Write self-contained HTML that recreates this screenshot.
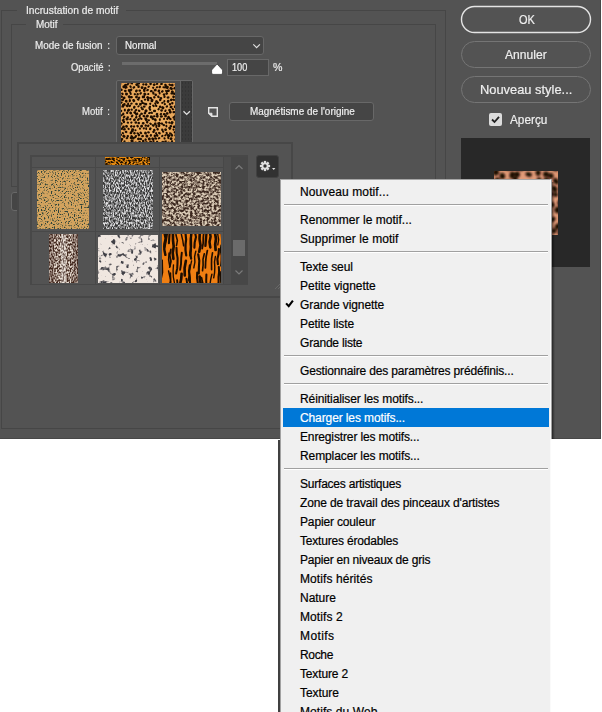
<!DOCTYPE html>
<html><head><meta charset="utf-8">
<style>
html,body{margin:0;padding:0;}
body{width:602px;height:712px;position:relative;overflow:hidden;background:#fff;font-family:"Liberation Sans",sans-serif;}
.a{position:absolute;}
#dlg{left:0;top:0;width:600px;height:438px;background:#535353;border-right:1px solid #474747;border-bottom:1px solid #474747;}
.t{position:absolute;color:#ececec;font-size:10.5px;line-height:14px;white-space:nowrap;-webkit-text-stroke:0.2px #ececec;}
.t{transform-origin:0 0;}
.c{margin-left:5px;}
.bt{font-size:13px;line-height:16px;color:#f0f0f0;}
.fs{position:absolute;border:1px solid #464646;box-sizing:border-box;}
.btn{position:absolute;box-sizing:border-box;border:1px solid #757575;border-radius:14px;color:#f0f0f0;font-size:13px;text-align:center;line-height:25px;}
#menu{left:280px;top:179px;width:271px;height:540px;background:#f0f0f0;box-sizing:border-box;border-top:1px solid #a6a6a6;border-right:1px solid #fafafa;border-left:1px solid #a2a2a2;}
.mi{-webkit-text-stroke:0.2px currentColor;position:absolute;left:283px;width:266px;height:19px;line-height:21px;font-size:12px;color:#000;white-space:nowrap;box-sizing:border-box;padding-left:17px;}
.hl{background:#0078d7;color:#fff;}
.sep{position:absolute;left:284px;width:264px;height:1px;background:#a0a0a0;border-bottom:1px solid #fff;}
</style></head><body>
<div id="dlg" class="a">
  <!-- outer fieldset -->
  <div class="fs" style="left:1px;top:10px;width:445px;height:419px;"></div>
  <div class="a" style="left:17px;top:4px;width:109px;height:14px;background:#535353;"></div>
  <div class="t" id="t_inc" style="left:25.8px;top:2.5px;transform:scaleX(0.976);">Incrustation de motif</div>
  <!-- inner fieldset -->
  <div class="fs" style="left:11px;top:24px;width:425px;height:163px;"></div>
  <div class="a" style="left:26px;top:17px;width:37px;height:14px;background:#535353;"></div>
  <div class="t" id="t_motif" style="left:35.5px;top:16.5px;transform:scaleX(0.945);">Motif</div>

  <div class="t" id="t_mode" style="left:34.7px;top:37.5px;transform:scaleX(0.940);">Mode de fusion<span class="c">:</span></div>
  <div class="a" style="left:116px;top:36px;width:148px;height:19px;box-sizing:border-box;background:#454545;border:1px solid #676767;border-radius:3px;"></div>
  <div class="t" id="t_normal" style="left:124.8px;top:37.5px;color:#f0f0f0;transform:scaleX(0.926);">Normal</div>
  <svg class="a" style="left:252px;top:43px;" width="10" height="7" viewBox="0 0 10 7"><path d="M1.3 1.3 L4.6 4.6 L7.9 1.3" fill="none" stroke="#e0e0e0" stroke-width="1.2"/></svg>

  <div class="t" id="t_opa" style="left:70.7px;top:59.5px;transform:scaleX(0.900);">Opacité<span class="c">:</span></div>
  <div class="a" style="left:122px;top:62px;width:95px;height:3px;background:#6c6c6c;"></div>
  <svg class="a" style="left:210px;top:63px;" width="14" height="14" viewBox="0 0 14 14"><path d="M7.1 1.0 L12.6 7.0 V10.0 Q12.6 11.4 11.2 11.4 H3.0 Q1.6 11.4 1.6 10.0 V7.0 Z" fill="#fff" stroke="#3a3a3a" stroke-width="0.8"/></svg>
  <div class="a" style="left:227px;top:59px;width:42px;height:17px;box-sizing:border-box;background:#454545;border:1px solid #686868;"></div>
  <div class="t" id="t_100" style="left:231.5px;top:59.5px;color:#f0f0f0;transform:scaleX(0.875);">100</div>
  <div class="t" id="t_pct" style="left:272.7px;top:59.5px;transform:scaleX(1.011);">%</div>

  <div class="t" id="t_motif2" style="left:81.7px;top:103.5px;transform:scaleX(0.906);">Motif<span class="c">:</span></div>
  <div class="a" style="left:116px;top:80px;width:77px;height:65px;box-sizing:border-box;background:#4b4b4b;border:1px solid #686868;border-radius:2px;"></div>
  <div class="a" style="left:180px;top:81px;width:1px;height:62px;background:#646464;"></div>
  <div class="a" style="left:181px;top:81px;width:11px;height:62px;background-color:#3b3b3b;background-image:radial-gradient(#343434 0.7px,transparent 0.8px);background-size:3px 4px;"></div>
  <svg class="a" style="left:182px;top:110px;" width="10" height="7" viewBox="0 0 10 7"><path d="M1.5 1.2 L4.7 4.4 L7.9 1.2" fill="none" stroke="#e0e0e0" stroke-width="1.3"/></svg>
  <!--LEO1--><svg class="a" style="left:121px;top:83px;" width="54" height="60" viewBox="0 0 54 60"><defs><radialGradient id="leo1g" cx="50%" cy="50%" r="70%"><stop offset="0" stop-color="#f0b468"/><stop offset="1" stop-color="#e2a052"/></radialGradient><filter id="leo1f" x="0" y="0" width="100%" height="100%"><feGaussianBlur stdDeviation="0.3"/></filter></defs><rect width="54" height="60" fill="url(#leo1g)"/><g filter="url(#leo1f)"><path d="M-3.5 -3.0A1.1 1.0 17 1 0 -1.3 -2.3A1.1 1.0 17 1 0 -3.5 -3.0ZM-0.2 -2.0A1.1 1.4 15 1 0 1.9 -1.5A1.1 1.4 15 1 0 -0.2 -2.0ZM4.0 -2.3A1.1 1.0 27 1 0 5.9 -1.3A1.1 1.0 27 1 0 4.0 -2.3ZM8.4 -1.8A1.0 1.3 66 1 0 9.1 -0.1A1.0 1.3 66 1 0 8.4 -1.8ZM13.7 -3.6A1.1 1.3 95 1 0 13.5 -1.4A1.1 1.3 95 1 0 13.7 -3.6ZM14.9 -2.5A1.3 1.2 45 1 0 16.7 -0.7A1.3 1.2 45 1 0 14.9 -2.5ZM20.9 -3.2A1.4 1.4 140 1 0 18.7 -1.4A1.4 1.4 140 1 0 20.9 -3.2ZM24.5 -3.9A1.1 1.3 79 1 0 25.0 -1.8A1.1 1.3 79 1 0 24.5 -3.9ZM28.9 -2.9A1.2 1.2 110 1 0 28.1 -0.7A1.2 1.2 110 1 0 28.9 -2.9ZM30.3 -2.8A1.1 1.3 20 1 0 32.4 -2.0A1.1 1.3 20 1 0 30.3 -2.8ZM34.8 -2.5A1.1 1.2 120 1 0 33.7 -0.6A1.1 1.2 120 1 0 34.8 -2.5ZM38.5 -3.6A1.3 1.0 51 1 0 40.1 -1.6A1.3 1.0 51 1 0 38.5 -3.6ZM43.7 -2.5A1.0 1.2 150 1 0 41.9 -1.5A1.0 1.2 150 1 0 43.7 -2.5ZM44.5 -2.1A1.4 1.0 15 1 0 47.2 -1.4A1.4 1.0 15 1 0 44.5 -2.1ZM49.3 -3.0A1.2 1.4 31 1 0 51.4 -1.7A1.2 1.4 31 1 0 49.3 -3.0ZM54.5 -2.6A1.2 1.0 178 1 0 52.1 -2.5A1.2 1.0 178 1 0 54.5 -2.6ZM56.4 -2.0A1.1 1.3 83 1 0 56.6 0.2A1.1 1.3 83 1 0 56.4 -2.0ZM-0.6 -0.5A1.4 1.3 105 1 0 -1.4 2.3A1.4 1.3 105 1 0 -0.6 -0.5ZM5.6 1.6A1.3 1.0 158 1 0 3.3 2.6A1.3 1.0 158 1 0 5.6 1.6ZM6.0 0.6A1.0 1.1 40 1 0 7.5 1.9A1.0 1.1 40 1 0 6.0 0.6ZM10.8 -0.6A1.0 1.0 92 1 0 10.7 1.3A1.0 1.0 92 1 0 10.8 -0.6ZM15.1 0.6A1.2 1.1 53 1 0 16.5 2.4A1.2 1.1 53 1 0 15.1 0.6ZM16.7 -0.4A1.3 1.2 38 1 0 18.7 1.3A1.3 1.2 38 1 0 16.7 -0.4ZM21.2 1.3A1.2 1.1 9 1 0 23.6 1.6A1.2 1.1 9 1 0 21.2 1.3ZM24.3 0.4A1.3 1.2 51 1 0 26.0 2.5A1.3 1.2 51 1 0 24.3 0.4ZM29.9 -0.3A1.2 1.0 107 1 0 29.2 1.9A1.2 1.0 107 1 0 29.9 -0.3ZM32.4 0.8A1.2 1.1 48 1 0 34.0 2.5A1.2 1.1 48 1 0 32.4 0.8ZM35.5 -0.1A1.1 1.1 59 1 0 36.6 1.8A1.1 1.1 59 1 0 35.5 -0.1ZM40.3 -0.2A1.1 1.4 80 1 0 40.7 2.0A1.1 1.4 80 1 0 40.3 -0.2ZM45.7 2.1A1.2 1.4 167 1 0 43.4 2.6A1.2 1.4 167 1 0 45.7 2.1ZM49.2 0.9A1.0 1.1 110 1 0 48.5 2.7A1.0 1.1 110 1 0 49.2 0.9ZM51.1 0.7A1.4 1.4 86 1 0 51.3 3.5A1.4 1.4 86 1 0 51.1 0.7ZM55.5 -0.0A1.4 1.1 107 1 0 54.7 2.6A1.4 1.1 107 1 0 55.5 -0.0ZM-1.6 3.6A1.3 1.1 100 1 0 -2.0 6.2A1.3 1.1 100 1 0 -1.6 3.6ZM4.2 3.5A1.4 1.4 171 1 0 1.4 3.9A1.4 1.4 171 1 0 4.2 3.5ZM4.4 3.2A1.3 1.3 68 1 0 5.4 5.5A1.3 1.3 68 1 0 4.4 3.2ZM10.4 3.1A1.0 1.3 145 1 0 8.7 4.2A1.0 1.3 145 1 0 10.4 3.1ZM12.2 3.4A1.1 1.3 54 1 0 13.6 5.3A1.1 1.3 54 1 0 12.2 3.4ZM17.7 2.2A1.4 1.0 97 1 0 17.4 4.9A1.4 1.0 97 1 0 17.7 2.2ZM22.5 4.4A1.4 1.1 171 1 0 19.8 4.9A1.4 1.1 171 1 0 22.5 4.4ZM25.1 4.3A1.2 1.3 134 1 0 23.4 6.1A1.2 1.3 134 1 0 25.1 4.3ZM28.7 2.9A1.3 1.0 143 1 0 26.6 4.5A1.3 1.0 143 1 0 28.7 2.9ZM32.9 4.0A1.0 1.1 133 1 0 31.5 5.5A1.0 1.1 133 1 0 32.9 4.0ZM36.8 3.4A1.1 1.0 139 1 0 35.1 4.9A1.1 1.0 139 1 0 36.8 3.4ZM39.6 2.8A1.4 1.1 124 1 0 37.9 5.1A1.4 1.1 124 1 0 39.6 2.8ZM43.3 3.4A1.0 1.4 93 1 0 43.2 5.3A1.0 1.4 93 1 0 43.3 3.4ZM45.0 4.0A1.4 1.3 17 1 0 47.6 4.8A1.4 1.3 17 1 0 45.0 4.0ZM50.9 4.4A1.3 1.4 122 1 0 49.5 6.5A1.3 1.4 122 1 0 50.9 4.4ZM52.8 4.4A1.0 1.4 45 1 0 54.2 5.9A1.0 1.4 45 1 0 52.8 4.4ZM56.4 4.2A1.4 1.1 1 1 0 59.2 4.2A1.4 1.1 1 1 0 56.4 4.2ZM1.1 5.8A1.1 1.2 124 1 0 -0.2 7.7A1.1 1.2 124 1 0 1.1 5.8ZM4.6 6.8A1.2 1.2 105 1 0 4.0 9.1A1.2 1.2 105 1 0 4.6 6.8ZM9.4 7.0A1.3 1.4 160 1 0 6.9 7.9A1.3 1.4 160 1 0 9.4 7.0ZM10.7 5.6A1.4 1.2 119 1 0 9.4 8.1A1.4 1.2 119 1 0 10.7 5.6ZM15.9 6.6A1.4 1.2 112 1 0 14.9 9.2A1.4 1.2 112 1 0 15.9 6.6ZM18.8 6.6A1.0 1.3 92 1 0 18.7 8.7A1.0 1.3 92 1 0 18.8 6.6ZM24.4 7.3A1.2 1.3 172 1 0 22.1 7.6A1.2 1.3 172 1 0 24.4 7.3ZM27.7 6.3A1.4 1.1 147 1 0 25.4 7.9A1.4 1.1 147 1 0 27.7 6.3ZM31.6 7.8A1.4 1.0 165 1 0 28.9 8.5A1.4 1.0 165 1 0 31.6 7.8ZM33.9 5.9A1.3 1.1 76 1 0 34.5 8.3A1.3 1.1 76 1 0 33.9 5.9ZM36.7 7.5A1.2 1.3 22 1 0 38.9 8.4A1.2 1.3 22 1 0 36.7 7.5ZM42.5 7.7A1.4 1.0 149 1 0 40.1 9.1A1.4 1.0 149 1 0 42.5 7.7ZM44.1 7.4A1.4 1.0 29 1 0 46.7 8.8A1.4 1.0 29 1 0 44.1 7.4ZM48.8 7.5A1.4 1.1 169 1 0 46.1 8.0A1.4 1.1 169 1 0 48.8 7.5ZM52.1 7.7A1.2 1.2 125 1 0 50.7 9.6A1.2 1.2 125 1 0 52.1 7.7ZM56.9 7.0A1.1 1.1 160 1 0 54.9 7.7A1.1 1.1 160 1 0 56.9 7.0ZM-2.0 9.5A1.4 1.2 80 1 0 -1.6 12.2A1.4 1.2 80 1 0 -2.0 9.5ZM2.1 10.1A1.0 1.0 138 1 0 0.7 11.4A1.0 1.0 138 1 0 2.1 10.1ZM5.7 9.7A1.4 1.2 99 1 0 5.3 12.4A1.4 1.2 99 1 0 5.7 9.7ZM10.4 9.9A1.0 1.4 161 1 0 8.6 10.6A1.0 1.4 161 1 0 10.4 9.9ZM13.4 10.2A1.1 1.0 66 1 0 14.3 12.2A1.1 1.0 66 1 0 13.4 10.2ZM15.5 10.9A1.2 1.3 16 1 0 17.8 11.6A1.2 1.3 16 1 0 15.5 10.9ZM18.8 9.7A1.1 1.4 41 1 0 20.5 11.1A1.1 1.4 41 1 0 18.8 9.7ZM24.8 10.3A1.3 1.3 137 1 0 22.9 12.0A1.3 1.3 137 1 0 24.8 10.3ZM26.2 10.9A1.0 1.0 8 1 0 28.3 11.2A1.0 1.0 8 1 0 26.2 10.9ZM33.4 9.8A1.1 1.4 164 1 0 31.3 10.4A1.1 1.4 164 1 0 33.4 9.8ZM36.0 11.5A1.3 1.3 167 1 0 33.4 12.1A1.3 1.3 167 1 0 36.0 11.5ZM38.7 8.9A1.3 1.0 93 1 0 38.6 11.5A1.3 1.0 93 1 0 38.7 8.9ZM42.0 10.7A1.2 1.2 39 1 0 43.9 12.2A1.2 1.2 39 1 0 42.0 10.7ZM44.8 9.8A1.2 1.1 41 1 0 46.6 11.3A1.2 1.1 41 1 0 44.8 9.8ZM51.0 9.3A1.1 1.3 102 1 0 50.5 11.6A1.1 1.3 102 1 0 51.0 9.3ZM54.4 10.6A1.2 1.0 173 1 0 52.1 10.9A1.2 1.0 173 1 0 54.4 10.6ZM57.3 11.5A1.0 1.0 155 1 0 55.4 12.4A1.0 1.0 155 1 0 57.3 11.5ZM1.6 12.8A1.2 1.2 136 1 0 -0.2 14.5A1.2 1.2 136 1 0 1.6 12.8ZM4.5 14.7A1.4 1.3 174 1 0 1.6 15.0A1.4 1.3 174 1 0 4.5 14.7ZM9.5 13.2A1.4 1.4 150 1 0 7.1 14.6A1.4 1.4 150 1 0 9.5 13.2ZM11.8 13.8A1.4 1.1 165 1 0 9.1 14.5A1.4 1.1 165 1 0 11.8 13.8ZM14.7 12.9A1.3 1.4 54 1 0 16.3 15.1A1.3 1.4 54 1 0 14.7 12.9ZM18.7 13.8A1.3 1.1 122 1 0 17.3 16.0A1.3 1.1 122 1 0 18.7 13.8ZM22.2 12.5A1.4 1.4 80 1 0 22.7 15.2A1.4 1.4 80 1 0 22.2 12.5ZM27.6 13.6A1.3 1.3 134 1 0 25.8 15.4A1.3 1.3 134 1 0 27.6 13.6ZM28.2 14.8A1.4 1.0 11 1 0 30.9 15.4A1.4 1.0 11 1 0 28.2 14.8ZM32.5 13.3A1.2 1.1 51 1 0 34.1 15.2A1.2 1.1 51 1 0 32.5 13.3ZM37.1 12.6A1.3 1.0 78 1 0 37.6 15.1A1.3 1.0 78 1 0 37.1 12.6ZM38.5 15.2A1.4 1.2 0 1 0 41.3 15.2A1.4 1.2 0 1 0 38.5 15.2ZM42.4 13.5A1.1 1.4 8 1 0 44.6 13.8A1.1 1.4 8 1 0 42.4 13.5ZM47.0 13.5A1.1 1.1 88 1 0 47.1 15.6A1.1 1.1 88 1 0 47.0 13.5ZM51.3 13.6A1.1 1.3 8 1 0 53.6 13.9A1.1 1.3 8 1 0 51.3 13.6ZM55.5 13.4A1.0 1.2 130 1 0 54.2 14.9A1.0 1.2 130 1 0 55.5 13.4ZM-1.8 16.5A1.3 1.3 111 1 0 -2.7 19.0A1.3 1.3 111 1 0 -1.8 16.5ZM1.1 15.7A1.2 1.2 70 1 0 1.9 17.9A1.2 1.2 70 1 0 1.1 15.7ZM5.5 16.8A1.4 1.4 104 1 0 4.9 19.6A1.4 1.4 104 1 0 5.5 16.8ZM7.8 17.5A1.1 1.2 7 1 0 9.9 17.8A1.1 1.2 7 1 0 7.8 17.5ZM13.9 17.1A1.3 1.3 156 1 0 11.6 18.1A1.3 1.3 156 1 0 13.9 17.1ZM15.9 16.0A1.4 1.0 23 1 0 18.5 17.1A1.4 1.0 23 1 0 15.9 16.0ZM21.8 18.0A1.1 1.1 164 1 0 19.7 18.6A1.1 1.1 164 1 0 21.8 18.0ZM23.4 15.7A1.1 1.2 52 1 0 24.7 17.5A1.1 1.2 52 1 0 23.4 15.7ZM26.8 15.5A1.4 1.0 80 1 0 27.3 18.2A1.4 1.0 80 1 0 26.8 15.5ZM29.8 17.1A1.3 1.4 19 1 0 32.2 17.9A1.3 1.4 19 1 0 29.8 17.1ZM34.5 17.4A1.4 1.3 46 1 0 36.5 19.4A1.4 1.3 46 1 0 34.5 17.4ZM40.3 16.4A1.2 1.3 155 1 0 38.1 17.4A1.2 1.3 155 1 0 40.3 16.4ZM42.3 18.2A1.0 1.3 12 1 0 44.3 18.6A1.0 1.3 12 1 0 42.3 18.2ZM45.9 18.0A1.3 1.4 14 1 0 48.4 18.6A1.3 1.4 14 1 0 45.9 18.0ZM51.1 15.7A1.4 1.3 126 1 0 49.5 18.0A1.4 1.3 126 1 0 51.1 15.7ZM53.6 16.1A1.0 1.2 139 1 0 52.1 17.4A1.0 1.2 139 1 0 53.6 16.1ZM56.2 16.8A1.2 1.2 9 1 0 58.5 17.2A1.2 1.2 9 1 0 56.2 16.8ZM0.0 18.7A1.0 1.1 60 1 0 1.0 20.5A1.0 1.1 60 1 0 0.0 18.7ZM3.6 19.9A1.4 1.3 98 1 0 3.2 22.7A1.4 1.3 98 1 0 3.6 19.9ZM7.1 19.6A1.4 1.0 89 1 0 7.1 22.4A1.4 1.0 89 1 0 7.1 19.6ZM10.2 19.7A1.0 1.0 75 1 0 10.7 21.6A1.0 1.0 75 1 0 10.2 19.7ZM14.1 20.8A1.4 1.2 10 1 0 16.9 21.3A1.4 1.2 10 1 0 14.1 20.8ZM19.6 19.9A1.4 1.0 96 1 0 19.3 22.5A1.4 1.0 96 1 0 19.6 19.9ZM22.8 19.4A1.0 1.3 114 1 0 22.1 21.1A1.0 1.3 114 1 0 22.8 19.4ZM23.8 20.5A1.3 1.2 29 1 0 26.1 21.8A1.3 1.2 29 1 0 23.8 20.5ZM28.5 20.1A1.0 1.0 41 1 0 30.0 21.4A1.0 1.0 41 1 0 28.5 20.1ZM35.2 20.2A1.0 1.3 153 1 0 33.4 21.1A1.0 1.3 153 1 0 35.2 20.2ZM36.0 18.5A1.3 1.1 59 1 0 37.3 20.7A1.3 1.1 59 1 0 36.0 18.5ZM41.0 18.9A1.0 1.0 73 1 0 41.6 20.8A1.0 1.0 73 1 0 41.0 18.9ZM43.8 19.9A1.2 1.1 88 1 0 43.9 22.3A1.2 1.1 88 1 0 43.8 19.9ZM48.9 20.0A1.3 1.2 88 1 0 49.0 22.6A1.3 1.2 88 1 0 48.9 20.0ZM51.4 19.0A1.2 1.2 93 1 0 51.2 21.5A1.2 1.2 93 1 0 51.4 19.0ZM54.5 20.9A1.2 1.4 18 1 0 56.8 21.7A1.2 1.4 18 1 0 54.5 20.9ZM-2.2 23.2A1.4 1.0 35 1 0 0.1 24.8A1.4 1.0 35 1 0 -2.2 23.2ZM0.8 22.4A1.4 1.4 20 1 0 3.3 23.3A1.4 1.4 20 1 0 0.8 22.4ZM5.0 21.9A1.4 1.0 45 1 0 7.0 23.8A1.4 1.0 45 1 0 5.0 21.9ZM8.0 21.9A1.2 1.4 53 1 0 9.5 23.8A1.2 1.4 53 1 0 8.0 21.9ZM12.1 24.0A1.2 1.3 15 1 0 14.4 24.6A1.2 1.3 15 1 0 12.1 24.0ZM18.3 22.5A1.2 1.0 135 1 0 16.6 24.2A1.2 1.0 135 1 0 18.3 22.5ZM21.7 24.5A1.1 1.1 173 1 0 19.4 24.8A1.1 1.1 173 1 0 21.7 24.5ZM24.6 23.5A1.4 1.1 173 1 0 21.8 23.8A1.4 1.1 173 1 0 24.6 23.5ZM27.7 24.1A1.1 1.4 20 1 0 29.7 24.8A1.1 1.4 20 1 0 27.7 24.1ZM33.1 22.1A1.0 1.1 132 1 0 31.8 23.5A1.0 1.1 132 1 0 33.1 22.1ZM34.3 22.1A1.2 1.1 43 1 0 36.1 23.7A1.2 1.1 43 1 0 34.3 22.1ZM37.9 23.5A1.2 1.3 16 1 0 40.3 24.1A1.2 1.3 16 1 0 37.9 23.5ZM42.7 23.7A1.4 1.4 132 1 0 40.9 25.8A1.4 1.4 132 1 0 42.7 23.7ZM44.9 22.9A1.1 1.2 30 1 0 46.8 24.0A1.1 1.2 30 1 0 44.9 22.9ZM48.9 23.8A1.3 1.0 11 1 0 51.3 24.3A1.3 1.0 11 1 0 48.9 23.8ZM54.2 22.7A1.2 1.1 91 1 0 54.2 25.0A1.2 1.1 91 1 0 54.2 22.7ZM59.4 22.7A1.1 1.2 159 1 0 57.3 23.5A1.1 1.2 159 1 0 59.4 22.7ZM-1.5 27.8A1.4 1.2 6 1 0 1.3 28.1A1.4 1.2 6 1 0 -1.5 27.8ZM4.9 27.0A1.0 1.4 175 1 0 2.8 27.2A1.0 1.4 175 1 0 4.9 27.0ZM6.6 26.3A1.3 1.4 41 1 0 8.5 28.0A1.3 1.4 41 1 0 6.6 26.3ZM10.0 25.7A1.1 1.1 53 1 0 11.4 27.5A1.1 1.1 53 1 0 10.0 25.7ZM14.1 26.5A1.1 1.4 42 1 0 15.7 28.0A1.1 1.4 42 1 0 14.1 26.5ZM17.2 26.7A1.3 1.1 49 1 0 19.0 28.8A1.3 1.1 49 1 0 17.2 26.7ZM20.1 26.1A1.4 1.0 1 1 0 23.0 26.2A1.4 1.0 1 1 0 20.1 26.1ZM24.0 26.9A1.4 1.3 45 1 0 25.9 28.9A1.4 1.3 45 1 0 24.0 26.9ZM28.3 25.2A1.4 1.1 61 1 0 29.7 27.7A1.4 1.1 61 1 0 28.3 25.2ZM33.5 26.8A1.2 1.2 87 1 0 33.6 29.1A1.2 1.2 87 1 0 33.5 26.8ZM36.9 25.5A1.0 1.0 41 1 0 38.3 26.8A1.0 1.0 41 1 0 36.9 25.5ZM40.5 26.3A1.2 1.4 87 1 0 40.6 28.7A1.2 1.4 87 1 0 40.5 26.3ZM43.5 27.4A1.0 1.1 24 1 0 45.3 28.2A1.0 1.1 24 1 0 43.5 27.4ZM49.0 26.0A1.2 1.4 110 1 0 48.2 28.3A1.2 1.4 110 1 0 49.0 26.0ZM52.6 25.4A1.0 1.2 134 1 0 51.2 26.9A1.0 1.2 134 1 0 52.6 25.4ZM55.4 25.0A1.1 1.0 116 1 0 54.4 27.0A1.1 1.0 116 1 0 55.4 25.0ZM-1.7 28.5A1.4 1.2 102 1 0 -2.3 31.3A1.4 1.2 102 1 0 -1.7 28.5ZM1.2 30.5A1.1 1.4 26 1 0 3.2 31.5A1.1 1.4 26 1 0 1.2 30.5ZM5.1 29.5A1.1 1.2 19 1 0 7.2 30.2A1.1 1.2 19 1 0 5.1 29.5ZM10.8 29.3A1.3 1.4 147 1 0 8.6 30.8A1.3 1.4 147 1 0 10.8 29.3ZM14.5 28.7A1.2 1.0 136 1 0 12.8 30.3A1.2 1.0 136 1 0 14.5 28.7ZM15.1 29.9A1.3 1.3 60 1 0 16.3 32.1A1.3 1.3 60 1 0 15.1 29.9ZM20.9 29.7A1.1 1.2 108 1 0 20.3 31.8A1.1 1.2 108 1 0 20.9 29.7ZM22.6 30.2A1.3 1.2 3 1 0 25.2 30.3A1.3 1.2 3 1 0 22.6 30.2ZM28.1 29.0A1.1 1.4 71 1 0 28.8 31.1A1.1 1.4 71 1 0 28.1 29.0ZM31.7 29.2A1.0 1.2 144 1 0 30.0 30.4A1.0 1.2 144 1 0 31.7 29.2ZM35.0 30.5A1.2 1.2 34 1 0 37.0 31.8A1.2 1.2 34 1 0 35.0 30.5ZM40.7 30.1A1.3 1.1 130 1 0 39.0 32.1A1.3 1.1 130 1 0 40.7 30.1ZM44.6 30.9A1.4 1.0 171 1 0 41.8 31.3A1.4 1.0 171 1 0 44.6 30.9ZM47.1 29.5A1.3 1.4 137 1 0 45.2 31.3A1.3 1.4 137 1 0 47.1 29.5ZM49.0 27.8A1.4 1.4 78 1 0 49.6 30.6A1.4 1.4 78 1 0 49.0 27.8ZM52.7 28.1A1.1 1.1 80 1 0 53.1 30.2A1.1 1.1 80 1 0 52.7 28.1ZM56.8 30.6A1.2 1.1 14 1 0 59.2 31.2A1.2 1.1 14 1 0 56.8 30.6ZM-0.1 31.5A1.0 1.3 62 1 0 0.8 33.3A1.0 1.3 62 1 0 -0.1 31.5ZM2.4 33.3A1.0 1.3 44 1 0 3.8 34.7A1.0 1.3 44 1 0 2.4 33.3ZM5.6 34.1A1.2 1.0 3 1 0 8.0 34.2A1.2 1.0 3 1 0 5.6 34.1ZM10.2 32.4A1.1 1.2 33 1 0 12.0 33.6A1.1 1.2 33 1 0 10.2 32.4ZM14.3 33.7A1.1 1.3 30 1 0 16.2 34.8A1.1 1.3 30 1 0 14.3 33.7ZM17.8 32.7A1.0 1.4 14 1 0 19.7 33.1A1.0 1.4 14 1 0 17.8 32.7ZM23.6 32.3A1.1 1.1 125 1 0 22.4 34.0A1.1 1.1 125 1 0 23.6 32.3ZM25.1 32.6A1.4 1.3 21 1 0 27.7 33.6A1.4 1.3 21 1 0 25.1 32.6ZM30.8 32.6A1.4 1.3 109 1 0 29.9 35.2A1.4 1.3 109 1 0 30.8 32.6ZM32.0 33.0A1.3 1.0 8 1 0 34.6 33.3A1.3 1.0 8 1 0 32.0 33.0ZM36.8 32.0A1.4 1.2 112 1 0 35.8 34.6A1.4 1.2 112 1 0 36.8 32.0ZM40.0 32.5A1.1 1.3 69 1 0 40.8 34.5A1.1 1.3 69 1 0 40.0 32.5ZM45.8 32.9A1.3 1.1 179 1 0 43.3 32.9A1.3 1.1 179 1 0 45.8 32.9ZM46.8 33.3A1.4 1.0 48 1 0 48.6 35.3A1.4 1.0 48 1 0 46.8 33.3ZM53.7 33.5A1.3 1.1 139 1 0 51.7 35.2A1.3 1.1 139 1 0 53.7 33.5ZM53.4 32.3A1.4 1.2 18 1 0 56.0 33.2A1.4 1.2 18 1 0 53.4 32.3ZM-1.3 34.7A1.1 1.0 117 1 0 -2.3 36.7A1.1 1.0 117 1 0 -1.3 34.7ZM1.6 36.2A1.0 1.1 50 1 0 2.8 37.6A1.0 1.1 50 1 0 1.6 36.2ZM5.6 34.7A1.4 1.2 69 1 0 6.6 37.2A1.4 1.2 69 1 0 5.6 34.7ZM8.6 35.5A1.0 1.1 41 1 0 10.1 36.8A1.0 1.1 41 1 0 8.6 35.5ZM12.6 35.8A1.3 1.4 48 1 0 14.3 37.8A1.3 1.4 48 1 0 12.6 35.8ZM16.6 35.8A1.1 1.4 43 1 0 18.2 37.3A1.1 1.4 43 1 0 16.6 35.8ZM20.5 34.7A1.1 1.3 119 1 0 19.5 36.6A1.1 1.3 119 1 0 20.5 34.7ZM26.0 35.6A1.3 1.4 148 1 0 23.9 36.9A1.3 1.4 148 1 0 26.0 35.6ZM29.0 37.2A1.2 1.1 176 1 0 26.6 37.3A1.2 1.1 176 1 0 29.0 37.2ZM31.1 35.0A1.2 1.1 39 1 0 32.9 36.5A1.2 1.1 39 1 0 31.1 35.0ZM35.5 36.3A1.3 1.4 152 1 0 33.2 37.5A1.3 1.4 152 1 0 35.5 36.3ZM39.0 35.2A1.4 1.0 95 1 0 38.7 38.0A1.4 1.0 95 1 0 39.0 35.2ZM43.2 34.7A1.1 1.0 98 1 0 42.9 36.9A1.1 1.0 98 1 0 43.2 34.7ZM46.1 34.8A1.1 1.0 81 1 0 46.4 37.1A1.1 1.0 81 1 0 46.1 34.8ZM50.6 35.9A1.2 1.0 171 1 0 48.2 36.3A1.2 1.0 171 1 0 50.6 35.9ZM54.6 36.1A1.1 1.1 165 1 0 52.5 36.7A1.1 1.1 165 1 0 54.6 36.1ZM55.7 36.2A1.0 1.4 48 1 0 57.0 37.7A1.0 1.4 48 1 0 55.7 36.2ZM-0.7 40.2A1.2 1.1 14 1 0 1.7 40.8A1.2 1.1 14 1 0 -0.7 40.2ZM3.0 37.6A1.3 1.2 95 1 0 2.8 40.2A1.3 1.2 95 1 0 3.0 37.6ZM5.9 39.1A1.1 1.0 32 1 0 7.9 40.3A1.1 1.0 32 1 0 5.9 39.1ZM10.8 38.6A1.1 1.0 113 1 0 9.9 40.6A1.1 1.0 113 1 0 10.8 38.6ZM14.0 38.6A1.2 1.3 46 1 0 15.7 40.4A1.2 1.3 46 1 0 14.0 38.6ZM16.6 39.7A1.2 1.3 16 1 0 18.9 40.4A1.2 1.3 16 1 0 16.6 39.7ZM21.8 39.1A1.2 1.4 71 1 0 22.6 41.4A1.2 1.4 71 1 0 21.8 39.1ZM25.7 37.9A1.3 1.2 69 1 0 26.6 40.4A1.3 1.2 69 1 0 25.7 37.9ZM28.4 40.0A1.4 1.0 34 1 0 30.8 41.6A1.4 1.0 34 1 0 28.4 40.0ZM34.8 39.5A1.4 1.1 115 1 0 33.6 42.0A1.4 1.1 115 1 0 34.8 39.5ZM37.3 39.2A1.4 1.3 66 1 0 38.4 41.7A1.4 1.3 66 1 0 37.3 39.2ZM39.4 40.5A1.4 1.2 5 1 0 42.2 40.7A1.4 1.2 5 1 0 39.4 40.5ZM46.1 38.7A1.1 1.1 146 1 0 44.3 39.9A1.1 1.1 146 1 0 46.1 38.7ZM49.2 39.0A1.1 1.0 146 1 0 47.4 40.3A1.1 1.0 146 1 0 49.2 39.0ZM49.9 39.2A1.3 1.2 31 1 0 52.0 40.4A1.3 1.2 31 1 0 49.9 39.2ZM57.5 39.0A1.2 1.3 147 1 0 55.5 40.3A1.2 1.3 147 1 0 57.5 39.0ZM-1.5 41.0A1.4 1.2 73 1 0 -0.7 43.6A1.4 1.2 73 1 0 -1.5 41.0ZM3.8 43.7A1.3 1.0 175 1 0 1.3 43.9A1.3 1.0 175 1 0 3.8 43.7ZM5.2 42.0A1.4 1.3 75 1 0 5.9 44.7A1.4 1.3 75 1 0 5.2 42.0ZM9.8 42.3A1.2 1.3 66 1 0 10.8 44.5A1.2 1.3 66 1 0 9.8 42.3ZM14.1 43.1A1.1 1.1 158 1 0 12.0 44.0A1.1 1.1 158 1 0 14.1 43.1ZM15.9 41.9A1.4 1.0 59 1 0 17.3 44.3A1.4 1.0 59 1 0 15.9 41.9ZM21.0 41.8A1.4 1.4 107 1 0 20.2 44.6A1.4 1.4 107 1 0 21.0 41.8ZM25.0 41.4A1.2 1.0 102 1 0 24.5 43.7A1.2 1.0 102 1 0 25.0 41.4ZM26.3 42.2A1.1 1.1 35 1 0 28.1 43.4A1.1 1.1 35 1 0 26.3 42.2ZM31.0 41.9A1.4 1.1 25 1 0 33.5 43.1A1.4 1.1 25 1 0 31.0 41.9ZM34.5 43.1A1.0 1.4 4 1 0 36.4 43.3A1.0 1.4 4 1 0 34.5 43.1ZM37.1 42.4A1.1 1.4 20 1 0 39.2 43.2A1.1 1.4 20 1 0 37.1 42.4ZM42.8 41.0A1.1 1.3 93 1 0 42.7 43.2A1.1 1.3 93 1 0 42.8 41.0ZM46.4 42.9A1.0 1.4 171 1 0 44.4 43.2A1.0 1.4 171 1 0 46.4 42.9ZM51.0 43.0A1.2 1.0 167 1 0 48.7 43.5A1.2 1.0 167 1 0 51.0 43.0ZM52.9 42.5A1.3 1.4 76 1 0 53.6 45.1A1.3 1.4 76 1 0 52.9 42.5ZM56.3 42.8A1.3 1.4 42 1 0 58.2 44.5A1.3 1.4 42 1 0 56.3 42.8ZM2.3 45.2A1.4 1.2 162 1 0 -0.5 46.1A1.4 1.2 162 1 0 2.3 45.2ZM3.0 45.3A1.1 1.4 61 1 0 4.0 47.3A1.1 1.4 61 1 0 3.0 45.3ZM7.4 44.7A1.2 1.1 80 1 0 7.8 47.1A1.2 1.1 80 1 0 7.4 44.7ZM10.2 46.9A1.4 1.4 10 1 0 12.8 47.3A1.4 1.4 10 1 0 10.2 46.9ZM14.2 46.3A1.0 1.0 73 1 0 14.8 48.2A1.0 1.0 73 1 0 14.2 46.3ZM20.0 45.5A1.0 1.0 175 1 0 17.9 45.7A1.0 1.0 175 1 0 20.0 45.5ZM21.9 45.1A1.0 1.0 18 1 0 23.8 45.7A1.0 1.0 18 1 0 21.9 45.1ZM25.1 44.3A1.4 1.0 86 1 0 25.3 47.1A1.4 1.0 86 1 0 25.1 44.3ZM28.2 45.2A1.2 1.3 28 1 0 30.3 46.3A1.2 1.3 28 1 0 28.2 45.2ZM34.5 46.9A1.2 1.4 167 1 0 32.1 47.5A1.2 1.4 167 1 0 34.5 46.9ZM36.1 45.1A1.2 1.2 66 1 0 37.1 47.4A1.2 1.2 66 1 0 36.1 45.1ZM42.4 46.6A1.1 1.3 165 1 0 40.2 47.2A1.1 1.3 165 1 0 42.4 46.6ZM45.1 45.5A1.3 1.4 113 1 0 44.1 47.9A1.3 1.4 113 1 0 45.1 45.5ZM49.6 44.6A1.2 1.2 142 1 0 47.8 46.0A1.2 1.2 142 1 0 49.6 44.6ZM51.9 45.8A1.1 1.0 54 1 0 53.2 47.6A1.1 1.0 54 1 0 51.9 45.8ZM56.9 45.9A1.1 1.1 155 1 0 54.8 46.9A1.1 1.1 155 1 0 56.9 45.9ZM-2.8 49.0A1.1 1.4 55 1 0 -1.5 50.7A1.1 1.4 55 1 0 -2.8 49.0ZM2.2 49.2A1.0 1.1 107 1 0 1.6 51.1A1.0 1.1 107 1 0 2.2 49.2ZM4.1 47.9A1.3 1.2 46 1 0 6.0 49.8A1.3 1.2 46 1 0 4.1 47.9ZM8.8 49.3A1.3 1.3 19 1 0 11.2 50.2A1.3 1.3 19 1 0 8.8 49.3ZM12.8 49.2A1.2 1.0 58 1 0 14.0 51.2A1.2 1.0 58 1 0 12.8 49.2ZM15.5 50.0A1.3 1.0 17 1 0 18.1 50.8A1.3 1.0 17 1 0 15.5 50.0ZM20.7 49.3A1.1 1.1 144 1 0 19.0 50.6A1.1 1.1 144 1 0 20.7 49.3ZM24.9 48.7A1.4 1.4 108 1 0 24.1 51.4A1.4 1.4 108 1 0 24.9 48.7ZM27.7 48.2A1.1 1.4 100 1 0 27.3 50.4A1.1 1.4 100 1 0 27.7 48.2ZM33.2 48.0A1.1 1.2 131 1 0 31.7 49.7A1.1 1.2 131 1 0 33.2 48.0ZM34.4 49.4A1.1 1.1 49 1 0 35.8 51.1A1.1 1.1 49 1 0 34.4 49.4ZM39.0 49.2A1.1 1.2 124 1 0 37.8 51.0A1.1 1.2 124 1 0 39.0 49.2ZM41.7 47.6A1.1 1.1 66 1 0 42.6 49.7A1.1 1.1 66 1 0 41.7 47.6ZM46.6 49.9A1.0 1.0 162 1 0 44.8 50.5A1.0 1.0 162 1 0 46.6 49.9ZM49.9 49.6A1.0 1.3 119 1 0 48.9 51.3A1.0 1.3 119 1 0 49.9 49.6ZM53.7 48.0A1.2 1.3 79 1 0 54.2 50.4A1.2 1.3 79 1 0 53.7 48.0ZM56.1 49.4A1.0 1.4 48 1 0 57.5 50.9A1.0 1.4 48 1 0 56.1 49.4ZM-0.4 50.9A1.0 1.2 74 1 0 0.1 52.9A1.0 1.2 74 1 0 -0.4 50.9ZM3.8 52.2A1.4 1.4 130 1 0 2.0 54.3A1.4 1.4 130 1 0 3.8 52.2ZM5.6 53.0A1.2 1.1 5 1 0 8.0 53.2A1.2 1.1 5 1 0 5.6 53.0ZM9.6 52.5A1.4 1.1 34 1 0 11.9 54.1A1.4 1.1 34 1 0 9.6 52.5ZM13.7 53.1A1.1 1.4 27 1 0 15.6 54.1A1.1 1.4 27 1 0 13.7 53.1ZM17.2 51.3A1.1 1.3 49 1 0 18.7 53.0A1.1 1.3 49 1 0 17.2 51.3ZM22.9 52.7A1.4 1.2 163 1 0 20.2 53.5A1.4 1.2 163 1 0 22.9 52.7ZM26.5 51.8A1.4 1.4 116 1 0 25.3 54.4A1.4 1.4 116 1 0 26.5 51.8ZM30.1 50.9A1.4 1.1 100 1 0 29.6 53.7A1.4 1.1 100 1 0 30.1 50.9ZM33.7 51.6A1.4 1.2 86 1 0 33.9 54.4A1.4 1.2 86 1 0 33.7 51.6ZM37.3 52.0A1.2 1.4 163 1 0 34.9 52.8A1.2 1.4 163 1 0 37.3 52.0ZM42.1 51.9A1.3 1.0 126 1 0 40.5 54.0A1.3 1.0 126 1 0 42.1 51.9ZM43.9 51.4A1.0 1.3 56 1 0 45.0 53.1A1.0 1.3 56 1 0 43.9 51.4ZM47.9 51.2A1.4 1.4 98 1 0 47.5 53.9A1.4 1.4 98 1 0 47.9 51.2ZM50.4 51.0A1.4 1.1 68 1 0 51.4 53.6A1.4 1.1 68 1 0 50.4 51.0ZM53.6 51.6A1.2 1.2 26 1 0 55.7 52.7A1.2 1.2 26 1 0 53.6 51.6ZM-0.9 53.9A1.0 1.0 108 1 0 -1.5 55.8A1.0 1.0 108 1 0 -0.9 53.9ZM0.0 55.9A1.1 1.1 25 1 0 1.9 56.7A1.1 1.1 25 1 0 0.0 55.9ZM7.0 54.3A1.3 1.0 144 1 0 4.9 55.8A1.3 1.0 144 1 0 7.0 54.3ZM10.3 53.7A1.2 1.1 104 1 0 9.7 56.0A1.2 1.1 104 1 0 10.3 53.7ZM13.7 54.7A1.4 1.3 161 1 0 11.0 55.6A1.4 1.3 161 1 0 13.7 54.7ZM16.9 54.7A1.3 1.4 64 1 0 18.0 57.1A1.3 1.4 64 1 0 16.9 54.7ZM18.7 55.8A1.2 1.0 14 1 0 21.0 56.3A1.2 1.0 14 1 0 18.7 55.8ZM25.6 56.0A1.1 1.3 147 1 0 23.7 57.2A1.1 1.3 147 1 0 25.6 56.0ZM29.4 54.9A1.4 1.4 136 1 0 27.3 56.9A1.4 1.4 136 1 0 29.4 54.9ZM32.7 54.9A1.3 1.3 135 1 0 30.9 56.7A1.3 1.3 135 1 0 32.7 54.9ZM35.2 54.4A1.2 1.3 113 1 0 34.3 56.6A1.2 1.3 113 1 0 35.2 54.4ZM37.7 54.3A1.0 1.1 65 1 0 38.5 56.1A1.0 1.1 65 1 0 37.7 54.3ZM44.5 55.1A1.0 1.1 163 1 0 42.6 55.7A1.0 1.1 163 1 0 44.5 55.1ZM48.4 54.7A1.1 1.2 168 1 0 46.2 55.1A1.1 1.2 168 1 0 48.4 54.7ZM50.5 54.3A1.4 1.3 107 1 0 49.7 57.1A1.4 1.3 107 1 0 50.5 54.3ZM56.0 56.0A1.3 1.2 173 1 0 53.3 56.4A1.3 1.2 173 1 0 56.0 56.0ZM58.1 54.9A1.4 1.2 157 1 0 55.6 55.9A1.4 1.2 157 1 0 58.1 54.9ZM1.1 58.7A1.1 1.4 170 1 0 -1.1 59.1A1.1 1.4 170 1 0 1.1 58.7ZM2.7 57.7A1.0 1.1 39 1 0 4.3 59.0A1.0 1.1 39 1 0 2.7 57.7ZM7.9 59.0A1.3 1.1 131 1 0 6.2 61.0A1.3 1.1 131 1 0 7.9 59.0ZM12.0 57.0A1.4 1.4 134 1 0 10.1 59.0A1.4 1.4 134 1 0 12.0 57.0ZM14.8 58.5A1.0 1.3 96 1 0 14.5 60.6A1.0 1.3 96 1 0 14.8 58.5ZM18.8 57.8A1.4 1.3 98 1 0 18.4 60.7A1.4 1.3 98 1 0 18.8 57.8ZM22.1 56.9A1.4 1.0 84 1 0 22.4 59.6A1.4 1.0 84 1 0 22.1 56.9ZM26.1 58.6A1.3 1.2 122 1 0 24.8 60.7A1.3 1.2 122 1 0 26.1 58.6ZM28.8 57.8A1.4 1.2 51 1 0 30.5 60.0A1.4 1.2 51 1 0 28.8 57.8ZM31.9 57.2A1.0 1.1 54 1 0 33.1 58.9A1.0 1.1 54 1 0 31.9 57.2ZM35.8 57.7A1.4 1.1 74 1 0 36.6 60.4A1.4 1.1 74 1 0 35.8 57.7ZM40.9 58.2A1.3 1.4 55 1 0 42.4 60.3A1.3 1.4 55 1 0 40.9 58.2ZM44.4 57.5A1.0 1.0 82 1 0 44.7 59.4A1.0 1.0 82 1 0 44.4 57.5ZM47.5 58.5A1.3 1.3 87 1 0 47.6 61.1A1.3 1.3 87 1 0 47.5 58.5ZM49.9 58.1A1.1 1.1 13 1 0 52.1 58.6A1.1 1.1 13 1 0 49.9 58.1ZM55.6 57.6A1.3 1.2 94 1 0 55.4 60.2A1.3 1.2 94 1 0 55.6 57.6ZM-1.6 60.6A1.1 1.0 87 1 0 -1.5 62.7A1.1 1.0 87 1 0 -1.6 60.6ZM-0.3 62.0A1.4 1.0 20 1 0 2.3 62.9A1.4 1.0 20 1 0 -0.3 62.0ZM4.2 61.2A1.3 1.3 74 1 0 5.0 63.8A1.3 1.3 74 1 0 4.2 61.2ZM9.1 61.9A1.3 1.2 35 1 0 11.2 63.4A1.3 1.2 35 1 0 9.1 61.9ZM14.3 61.8A1.4 1.4 169 1 0 11.5 62.4A1.4 1.4 169 1 0 14.3 61.8ZM15.9 62.8A1.1 1.1 14 1 0 18.0 63.3A1.1 1.1 14 1 0 15.9 62.8ZM19.6 62.1A1.3 1.2 29 1 0 21.9 63.4A1.3 1.2 29 1 0 19.6 62.1ZM24.1 62.0A1.0 1.0 53 1 0 25.3 63.6A1.0 1.0 53 1 0 24.1 62.0ZM28.2 61.1A1.2 1.2 157 1 0 26.0 62.1A1.2 1.2 157 1 0 28.2 61.1ZM29.4 63.0A1.1 1.2 6 1 0 31.5 63.2A1.1 1.2 6 1 0 29.4 63.0ZM34.2 62.2A1.0 1.1 32 1 0 35.8 63.2A1.0 1.1 32 1 0 34.2 62.2ZM38.5 61.5A1.1 1.0 111 1 0 37.7 63.6A1.1 1.0 111 1 0 38.5 61.5ZM42.8 61.1A1.2 1.2 62 1 0 43.9 63.2A1.2 1.2 62 1 0 42.8 61.1ZM44.8 60.4A1.3 1.4 47 1 0 46.5 62.3A1.3 1.4 47 1 0 44.8 60.4ZM50.6 62.0A1.0 1.1 95 1 0 50.4 64.0A1.0 1.1 95 1 0 50.6 62.0ZM54.3 60.8A1.0 1.4 75 1 0 54.9 62.9A1.0 1.4 75 1 0 54.3 60.8ZM56.5 61.7A1.1 1.2 5 1 0 58.7 61.8A1.1 1.2 5 1 0 56.5 61.7Z" fill="#1e0d03"/></g></svg><!--/LEO1-->

  <svg class="a" style="left:207px;top:106px;" width="12" height="12" viewBox="0 0 12 12"><path d="M1.7 1.7 H10.3 V10.3 H5 L1.7 7.2 Z" fill="none" stroke="#e4e4e4" stroke-width="1.4"/><path d="M1.7 7.2 H5 V10.3 Z" fill="#e4e4e4" stroke="#e4e4e4" stroke-width="0.8"/></svg>
  <div class="a" style="left:229px;top:102px;width:145px;height:19px;box-sizing:border-box;background:#454545;border:1px solid #686868;border-radius:3px;"></div>
  <div class="t" id="t_magn" style="left:250.0px;top:103.5px;color:#f0f0f0;transform:scaleX(0.947);">Magnétisme de l'origine</div>

  <!-- hidden button behind popup -->
  <div class="a" style="left:11px;top:192px;width:12px;height:19px;box-sizing:border-box;background:#454545;border:1px solid #686868;border-radius:3px;"></div>

  <!-- popup -->
  <div class="a" style="left:17px;top:142px;width:276px;height:156px;box-sizing:border-box;background:#535353;border:2px solid #474747;"></div>
  <!-- grid -->
  <div class="a" style="left:30px;top:155px;width:218px;height:130px;background:#484848;"></div>
  <div class="a" style="left:32px;top:157px;width:63px;height:10px;background:#535353;"></div>
  <div class="a" style="left:96px;top:157px;width:63px;height:10px;background:#535353;"></div>
  <div class="a" style="left:160px;top:157px;width:63px;height:10px;background:#535353;"></div>
  <div class="a" style="left:32px;top:168px;width:63px;height:63px;background:#535353;"></div>
  <div class="a" style="left:96px;top:168px;width:63px;height:63px;background:#535353;"></div>
  <div class="a" style="left:160px;top:168px;width:63px;height:63px;background:#535353;"></div>
  <div class="a" style="left:32px;top:232px;width:63px;height:52px;background:#535353;"></div>
  <div class="a" style="left:96px;top:232px;width:63px;height:52px;background:#535353;"></div>
  <div class="a" style="left:160px;top:232px;width:63px;height:52px;background:#535353;"></div>
  <div class="a" style="left:224px;top:157px;width:7px;height:127px;background:#4e4e4e;"></div>
<!--THUMBS-START-->
<svg class="a" style="left:105px;top:157px;" width="45" height="8"><defs><filter id="p_top" x="0" y="0" width="100%" height="100%" color-interpolation-filters="sRGB"><feTurbulence type="fractalNoise" baseFrequency="0.5 0.6" numOctaves="1" seed="5"/><feColorMatrix type="matrix" values="5 0 0 0 -1.950  5 0 0 0 -1.950  5 0 0 0 -1.950  0 0 0 0 1"/><feComponentTransfer><feFuncR type="table" tableValues="0.125 0.910"/><feFuncG type="table" tableValues="0.063 0.549"/><feFuncB type="table" tableValues="0.000 0.063"/></feComponentTransfer></filter></defs><rect width="45" height="8" rx="0" fill="#e88c10"/><rect width="45" height="8" rx="0" filter="url(#p_top)" clip-path="inset(0 round 0px)"/></svg>
<svg class="a" style="left:37px;top:170px;" width="52" height="59"><defs><filter id="p_tan" x="0" y="0" width="100%" height="100%" color-interpolation-filters="sRGB"><feTurbulence type="fractalNoise" baseFrequency="0.7" numOctaves="1" seed="2"/><feColorMatrix type="matrix" values="6 0 0 0 -1.800  6 0 0 0 -1.800  6 0 0 0 -1.800  0 0 0 0 1"/><feComponentTransfer><feFuncR type="table" tableValues="0.173 0.831"/><feFuncG type="table" tableValues="0.259 0.643"/><feFuncB type="table" tableValues="0.220 0.369"/></feComponentTransfer></filter></defs><rect width="52" height="59" rx="2" fill="#d4a45e"/><rect width="52" height="59" rx="2" filter="url(#p_tan)" clip-path="inset(0 round 2px)"/></svg>
<svg class="a" style="left:103px;top:170px;" width="50" height="59"><defs><filter id="p_gsn" x="0" y="0" width="100%" height="100%" color-interpolation-filters="sRGB"><feTurbulence type="fractalNoise" baseFrequency="0.8 0.4" numOctaves="2" seed="7"/><feColorMatrix type="matrix" values="3.0 0 0 0 -1.080  3.0 0 0 0 -1.080  3.0 0 0 0 -1.080  0 0 0 0 1"/><feComponentTransfer><feFuncR type="table" tableValues="0.212 0.886"/><feFuncG type="table" tableValues="0.212 0.886"/><feFuncB type="table" tableValues="0.212 0.894"/></feComponentTransfer></filter></defs><rect width="50" height="59" rx="0" fill="#e2e2e4"/><rect width="50" height="59" rx="0" filter="url(#p_gsn)" clip-path="inset(0 round 0px)"/></svg>
<svg class="a" style="left:162px;top:172px;" width="59" height="54"><defs><filter id="p_bsn" x="0" y="0" width="100%" height="100%" color-interpolation-filters="sRGB"><feTurbulence type="fractalNoise" baseFrequency="0.42" numOctaves="2" seed="11"/><feColorMatrix type="matrix" values="3.2 0 0 0 -1.100  3.2 0 0 0 -1.100  3.2 0 0 0 -1.100  0 0 0 0 1"/><feComponentTransfer><feFuncR type="table" tableValues="0.235 0.863"/><feFuncG type="table" tableValues="0.157 0.804"/><feFuncB type="table" tableValues="0.125 0.722"/></feComponentTransfer></filter></defs><rect width="59" height="54" rx="0" fill="#dccdb8"/><rect width="59" height="54" rx="0" filter="url(#p_bsn)" clip-path="inset(0 round 0px)"/></svg>
<svg class="a" style="left:49px;top:234px;" width="29" height="49"><defs><filter id="p_nsn" x="0" y="0" width="100%" height="100%" color-interpolation-filters="sRGB"><feTurbulence type="fractalNoise" baseFrequency="0.7 0.5" numOctaves="1" seed="4"/><feColorMatrix type="matrix" values="4 0 0 0 -1.500  4 0 0 0 -1.500  4 0 0 0 -1.500  0 0 0 0 1"/><feComponentTransfer><feFuncR type="table" tableValues="0.271 0.902"/><feFuncG type="table" tableValues="0.165 0.859"/><feFuncB type="table" tableValues="0.125 0.816"/></feComponentTransfer></filter></defs><rect width="29" height="49" rx="0" fill="#e6dbd0"/><rect width="29" height="49" rx="0" filter="url(#p_nsn)" clip-path="inset(0 round 0px)"/><rect x="0" width="5" height="49" fill="#3a2018" opacity=".25"/><rect x="12" width="5" height="49" fill="#fff" opacity=".25"/><rect x="24" width="5" height="49" fill="#3a2018" opacity=".25"/></svg>
<svg class="a" style="left:98px;top:235px;" width="60" height="48"><defs><filter id="p_wle" x="0" y="0" width="100%" height="100%" color-interpolation-filters="sRGB"><feTurbulence type="fractalNoise" baseFrequency="0.22" numOctaves="2" seed="9"/><feColorMatrix type="matrix" values="6 0 0 0 -1.550  6 0 0 0 -1.550  6 0 0 0 -1.550  0 0 0 0 1"/><feComponentTransfer><feFuncR type="table" tableValues="0.251 0.945"/><feFuncG type="table" tableValues="0.251 0.906"/><feFuncB type="table" tableValues="0.275 0.882"/></feComponentTransfer></filter></defs><rect width="60" height="48" rx="0" fill="#f1e7e1"/><rect width="60" height="48" rx="0" filter="url(#p_wle)" clip-path="inset(0 round 0px)"/></svg>
<!--THUMBS-END-->
<!--TIG--><svg class="a" style="left:162px;top:234px;" width="59" height="49" viewBox="0 0 59 49"><defs><filter id="tigf" x="0" y="0" width="100%" height="100%"><feGaussianBlur stdDeviation="0.3"/></filter></defs><rect width="59" height="49" fill="#f07f12"/><g filter="url(#tigf)" fill="none" stroke="#1a0a00" stroke-linecap="round" stroke-linejoin="round"><path d="M2.5 -1.0 L3.6 4.5 L2.4 9.9 L2.3 15.4 L3.4 20.9" stroke-width="2.4"/><path d="M0.3 26.1 L0.4 32.2 L0.6 38.3 L-0.7 44.4 L-1.4 50.5" stroke-width="1.4"/><path d="M4.8 0.1 L3.8 6.4 L2.5 12.7" stroke-width="2.4"/><path d="M7.1 19.0 L6.6 25.7 L7.8 32.4" stroke-width="1.5"/><path d="M6.6 37.1 L7.8 42.3 L8.8 47.5 L8.3 52.7 L7.9 57.9" stroke-width="1.5"/><path d="M7.9 -5.5 L7.4 1.9 L6.9 9.3" stroke-width="2.1"/><path d="M8.9 15.4 L7.7 21.3 L9.0 27.2 L7.7 33.1" stroke-width="1.7"/><path d="M8.6 38.9 L8.8 44.8 L7.5 50.6 L6.4 56.5 L5.5 62.4" stroke-width="1.2"/><path d="M10.9 0.0 L11.0 6.3 L11.7 12.5 L10.7 18.7 L11.4 24.9" stroke-width="2.6"/><path d="M11.5 30.9 L11.1 36.8 L11.3 42.8 L12.4 48.7 L12.0 54.7" stroke-width="1.3"/><path d="M13.6 -3.5 L14.1 1.5 L15.4 6.5 L14.5 11.6" stroke-width="1.5"/><path d="M14.5 13.8 L14.7 19.0 L15.6 24.1 L15.5 29.3 L15.2 34.4 L14.1 39.6" stroke-width="2.0"/><path d="M15.1 46.2 L15.7 51.4 L16.8 56.7" stroke-width="1.9"/><path d="M19.5 -5.1 L19.4 0.5 L20.7 6.2 L21.6 11.8" stroke-width="1.4"/><path d="M19.8 18.7 L19.2 24.4 L19.0 30.2 L18.1 35.9" stroke-width="1.9"/><path d="M19.6 39.8 L19.2 45.0 L18.1 50.2 L17.5 55.3 L18.3 60.5 L19.2 65.6" stroke-width="2.6"/><path d="M23.6 0.2 L24.1 5.5 L23.5 10.8 L23.5 16.0 L24.2 21.3" stroke-width="2.2"/><path d="M23.9 26.8 L22.6 34.1 L22.8 41.5" stroke-width="2.6"/><path d="M24.4 44.7 L25.2 49.9 L24.8 55.1 L25.2 60.3 L25.8 65.5" stroke-width="1.9"/><path d="M29.0 0.7 L29.0 6.7 L29.1 12.7 L28.2 18.7 L29.1 24.7" stroke-width="2.2"/><path d="M27.9 31.3 L27.0 37.2 L27.8 43.1 L28.0 49.0" stroke-width="2.2"/><path d="M29.6 -1.0 L28.7 4.6 L28.6 10.2 L29.0 15.8 L28.2 21.4" stroke-width="2.2"/><path d="M29.6 26.8 L28.5 31.8 L27.5 36.9 L27.0 41.9 L26.2 46.9" stroke-width="1.3"/><path d="M32.9 -2.3 L34.0 3.1 L32.7 8.4 L32.4 13.8" stroke-width="2.1"/><path d="M33.8 17.2 L32.6 22.7 L32.9 28.2 L31.8 33.8" stroke-width="1.4"/><path d="M35.2 38.5 L35.0 43.6 L35.8 48.8 L36.2 53.9" stroke-width="2.1"/><path d="M37.8 -1.2 L37.5 5.1 L38.5 11.4 L37.2 17.8" stroke-width="2.6"/><path d="M36.2 20.3 L37.3 26.7 L36.9 33.0 L36.8 39.4" stroke-width="2.1"/><path d="M37.6 42.5 L38.7 49.8 L38.9 57.2" stroke-width="2.7"/><path d="M41.8 -2.0 L41.3 3.5 L41.2 9.1 L40.2 14.6" stroke-width="1.7"/><path d="M42.3 19.7 L41.0 25.4 L41.1 31.1 L40.5 36.8" stroke-width="1.6"/><path d="M39.5 43.5 L40.8 49.1 L40.3 54.8 L40.6 60.4 L40.5 66.0" stroke-width="1.6"/><path d="M44.4 -0.1 L43.9 5.9 L43.4 11.8" stroke-width="2.3"/><path d="M45.4 16.5 L44.2 22.3 L43.6 28.1 L43.4 33.9" stroke-width="1.7"/><path d="M44.4 40.5 L44.2 46.6 L44.4 52.6 L45.0 58.7 L45.3 64.7" stroke-width="2.0"/><path d="M47.7 -2.9 L48.6 2.5 L47.5 7.9 L48.3 13.4" stroke-width="2.5"/><path d="M50.5 18.8 L49.6 24.5 L49.5 30.1 L49.6 35.8" stroke-width="1.6"/><path d="M49.9 40.2 L48.7 45.3 L48.0 50.4 L48.9 55.5" stroke-width="1.4"/><path d="M54.3 -5.8 L53.1 -0.4 L54.0 5.0 L53.2 10.4 L53.6 15.8" stroke-width="2.7"/><path d="M53.4 22.5 L52.5 27.9 L52.8 33.2 L52.6 38.6 L51.7 43.9" stroke-width="1.4"/><path d="M55.1 -5.1 L55.7 0.2 L56.7 5.6 L55.8 10.9" stroke-width="1.3"/><path d="M56.9 15.1 L56.6 20.1 L55.4 25.1 L55.9 30.1" stroke-width="2.1"/><path d="M56.8 32.9 L57.1 37.9 L56.5 42.9 L56.6 48.0 L55.9 53.0" stroke-width="2.0"/><path d="M59.1 -4.9 L59.7 1.9 L60.1 8.8" stroke-width="1.8"/><path d="M59.0 11.2 L58.3 16.4 L59.3 21.6 L59.2 26.8 L58.7 31.9" stroke-width="1.3"/><path d="M57.7 37.9 L58.8 43.2 L59.3 48.4" stroke-width="2.3"/></g></svg><!--/TIG-->
  <!-- scrollbar -->
  <div class="a" style="left:231px;top:157px;width:17px;height:127px;background:#474747;"></div>
  <div class="a" style="left:233px;top:240px;width:12px;height:16px;background:#6b6b6b;"></div>
  <svg class="a" style="left:234px;top:164px;" width="10" height="7" viewBox="0 0 10 7"><path d="M1.5 5 L5 1.5 L8.5 5" fill="none" stroke="#7a7a7a" stroke-width="1.2"/></svg>
  <svg class="a" style="left:234px;top:269px;" width="10" height="7" viewBox="0 0 10 7"><path d="M1.5 1.5 L5 5 L8.5 1.5" fill="none" stroke="#7a7a7a" stroke-width="1.2"/></svg>
  <!--GRIP--><svg class="a" style="left:274px;top:282px;" width="8" height="8" viewBox="0 0 8 8"><path d="M7 1 L1 7 M7 4 L4 7" stroke="#686868" stroke-width="1" fill="none"/></svg>
  <!-- gear -->
  <div class="a" style="left:256px;top:155px;width:23px;height:23px;box-sizing:border-box;background:#313131;border:1px solid #414141;border-radius:3px;"></div>
  <svg class="a" style="left:257px;top:158px;" width="22" height="16" viewBox="0 0 22 16"><g transform="translate(8,8)" fill="#dedede"><circle r="3.5"/><rect x="-1.15" y="-5.1" width="2.3" height="10.2"/><rect x="-1.15" y="-5.1" width="2.3" height="10.2" transform="rotate(45)"/><rect x="-1.15" y="-5.1" width="2.3" height="10.2" transform="rotate(90)"/><rect x="-1.15" y="-5.1" width="2.3" height="10.2" transform="rotate(135)"/><circle r="1.7" fill="#313131"/></g><path d="M15 10 H18.4 L16.7 11.9 Z" fill="#dedede"/></svg>

  <!-- right buttons -->
  <svg class="a" style="left:460px;top:5px;" width="132" height="29"><rect x="1.5" y="1.5" width="129" height="26" rx="13" fill="none" stroke="#e4e4e4" stroke-width="1.4"/></svg>
  <div class="t bt" id="t_ok" style="left:518.7px;top:12px;transform:scaleX(0.846);">OK</div>
  <div class="btn" style="left:461px;top:41px;width:130px;height:27px;"></div>
  <div class="t bt" id="t_ann" style="left:504.9px;top:47px;transform:scaleX(0.930);">Annuler</div>
  <div class="btn" style="left:461px;top:76px;width:130px;height:27px;"></div>
  <div class="t bt" id="t_nouv" style="left:479.5px;top:82px;transform:scaleX(0.990);">Nouveau style...</div>
  <div class="a" style="left:489px;top:113px;width:13px;height:13px;background:#dcdcdc;border-radius:2px;"></div>
  <svg class="a" style="left:489px;top:113px;" width="13" height="13" viewBox="0 0 13 13"><path d="M3 6.5 L5.5 9 L10 3.8" fill="none" stroke="#222" stroke-width="1.8"/></svg>
  <div class="t bt" id="t_apercu" style="left:509.6px;top:112px;transform:scaleX(0.908);">Aperçu</div>
  <div class="a" style="left:461px;top:138px;width:129px;height:129px;background:#282828;"></div>
  <!--LEO2--><svg class="a" style="left:494px;top:171px;" width="64" height="64" viewBox="0 0 64 64"><defs><radialGradient id="leo2g" cx="50%" cy="50%" r="70%"><stop offset="0" stop-color="#eaa684"/><stop offset="1" stop-color="#dc9470"/></radialGradient><filter id="leo2f" x="0" y="0" width="100%" height="100%"><feGaussianBlur stdDeviation="1.0"/></filter></defs><rect width="64" height="64" fill="url(#leo2g)"/><g filter="url(#leo2f)"><path d="M-6.7 -4.8A2.4 3.2 1 1 0 -2.0 -4.8A2.4 3.2 1 1 0 -6.7 -4.8ZM6.1 -5.5A2.9 2.6 157 1 0 0.8 -3.3A2.9 2.6 157 1 0 6.1 -5.5ZM14.3 -5.4A2.4 3.2 108 1 0 12.8 -0.9A2.4 3.2 108 1 0 14.3 -5.4ZM21.4 -6.6A2.3 2.8 151 1 0 17.4 -4.3A2.3 2.8 151 1 0 21.4 -6.6ZM26.5 -6.3A3.1 3.2 74 1 0 28.2 -0.4A3.1 3.2 74 1 0 26.5 -6.3ZM35.3 -8.3A3.1 3.2 68 1 0 37.6 -2.6A3.1 3.2 68 1 0 35.3 -8.3ZM45.6 -4.7A2.6 2.2 1 1 0 50.7 -4.6A2.6 2.2 1 1 0 45.6 -4.7ZM53.8 -6.6A2.6 2.7 6 1 0 59.0 -6.0A2.6 2.7 6 1 0 53.8 -6.6ZM58.6 -3.1A3.1 3.3 0 1 0 64.9 -3.1A3.1 3.3 0 1 0 58.6 -3.1ZM66.4 -3.9A3.2 2.4 2 1 0 72.8 -3.7A3.2 2.4 2 1 0 66.4 -3.9ZM4.5 -0.4A3.2 2.8 146 1 0 -0.8 3.1A3.2 2.8 146 1 0 4.5 -0.4ZM10.9 4.3A2.7 2.6 163 1 0 5.8 5.8A2.7 2.6 163 1 0 10.9 4.3ZM15.7 3.6A2.4 3.2 10 1 0 20.4 4.4A2.4 3.2 10 1 0 15.7 3.6ZM22.0 0.7A2.9 2.4 68 1 0 24.2 6.0A2.9 2.4 68 1 0 22.0 0.7ZM35.2 1.2A2.2 3.2 103 1 0 34.2 5.6A2.2 3.2 103 1 0 35.2 1.2ZM44.3 -1.0A2.9 2.2 93 1 0 44.0 4.7A2.9 2.2 93 1 0 44.3 -1.0ZM51.9 0.4A2.8 3.0 88 1 0 52.1 6.0A2.8 3.0 88 1 0 51.9 0.4ZM55.3 2.9A2.6 2.4 50 1 0 58.6 6.9A2.6 2.4 50 1 0 55.3 2.9ZM69.3 1.2A2.2 3.1 84 1 0 69.7 5.6A2.2 3.1 84 1 0 69.3 1.2ZM-8.8 7.6A2.4 2.5 22 1 0 -4.3 9.4A2.4 2.5 22 1 0 -8.8 7.6ZM3.6 6.6A2.8 2.3 97 1 0 3.0 12.1A2.8 2.3 97 1 0 3.6 6.6ZM12.7 9.3A2.7 3.0 63 1 0 15.2 14.2A2.7 3.0 63 1 0 12.7 9.3ZM21.9 5.5A2.9 2.3 102 1 0 20.7 11.2A2.9 2.3 102 1 0 21.9 5.5ZM28.7 9.8A2.8 2.4 74 1 0 30.2 15.2A2.8 2.4 74 1 0 28.7 9.8ZM34.5 10.2A2.5 2.3 44 1 0 38.0 13.7A2.5 2.3 44 1 0 34.5 10.2ZM42.8 8.3A2.3 2.4 12 1 0 47.4 9.3A2.3 2.4 12 1 0 42.8 8.3ZM52.5 6.4A2.6 2.9 90 1 0 52.5 11.6A2.6 2.9 90 1 0 52.5 6.4ZM64.0 8.7A2.5 3.3 142 1 0 60.0 11.8A2.5 3.3 142 1 0 64.0 8.7ZM72.6 6.9A2.7 2.4 143 1 0 68.3 10.2A2.7 2.4 143 1 0 72.6 6.9ZM0.2 14.1A3.2 2.4 70 1 0 2.3 20.1A3.2 2.4 70 1 0 0.2 14.1ZM7.0 18.8A2.7 2.3 12 1 0 12.4 20.0A2.7 2.3 12 1 0 7.0 18.8ZM13.4 13.9A3.1 3.1 41 1 0 18.1 17.9A3.1 3.1 41 1 0 13.4 13.9ZM27.5 14.3A2.2 2.4 116 1 0 25.5 18.3A2.2 2.4 116 1 0 27.5 14.3ZM36.0 16.7A2.3 2.8 151 1 0 32.0 18.9A2.3 2.8 151 1 0 36.0 16.7ZM46.9 16.1A3.2 2.2 149 1 0 41.3 19.5A3.2 2.2 149 1 0 46.9 16.1ZM49.6 17.1A2.8 2.8 16 1 0 54.9 18.6A2.8 2.8 16 1 0 49.6 17.1ZM58.8 15.2A3.3 2.3 57 1 0 62.3 20.7A3.3 2.3 57 1 0 58.8 15.2ZM69.9 13.3A3.0 2.7 125 1 0 66.5 18.2A3.0 2.7 125 1 0 69.9 13.3ZM-3.8 23.4A2.9 2.2 62 1 0 -1.0 28.6A2.9 2.2 62 1 0 -3.8 23.4ZM8.9 22.5A3.1 3.0 159 1 0 3.1 24.7A3.1 3.0 159 1 0 8.9 22.5ZM9.8 23.1A2.9 2.3 12 1 0 15.4 24.3A2.9 2.3 12 1 0 9.8 23.1ZM23.9 23.5A2.3 2.4 155 1 0 19.8 25.4A2.3 2.4 155 1 0 23.9 23.5ZM32.3 21.5A2.2 2.9 140 1 0 28.9 24.4A2.2 2.9 140 1 0 32.3 21.5ZM37.5 19.6A3.1 2.6 82 1 0 38.4 25.7A3.1 2.6 82 1 0 37.5 19.6ZM45.4 24.6A2.8 3.3 122 1 0 42.4 29.4A2.8 3.3 122 1 0 45.4 24.6ZM54.0 21.6A2.6 2.5 33 1 0 58.3 24.5A2.6 2.5 33 1 0 54.0 21.6ZM63.8 23.0A2.3 2.3 165 1 0 59.3 24.2A2.3 2.3 165 1 0 63.8 23.0ZM75.7 22.1A3.0 2.7 133 1 0 71.6 26.5A3.0 2.7 133 1 0 75.7 22.1ZM0.1 32.2A2.3 2.2 132 1 0 -2.9 35.6A2.3 2.2 132 1 0 0.1 32.2ZM7.0 28.8A2.5 2.9 26 1 0 11.5 31.0A2.5 2.9 26 1 0 7.0 28.8ZM16.3 28.6A3.2 2.7 80 1 0 17.4 34.9A3.2 2.7 80 1 0 16.3 28.6ZM25.1 28.7A2.3 2.5 76 1 0 26.2 33.1A2.3 2.5 76 1 0 25.1 28.7ZM32.0 28.2A2.6 3.3 103 1 0 30.8 33.2A2.6 3.3 103 1 0 32.0 28.2ZM41.1 32.6A3.2 3.3 24 1 0 47.0 35.2A3.2 3.3 24 1 0 41.1 32.6ZM50.3 30.3A2.7 2.6 144 1 0 46.0 33.4A2.7 2.6 144 1 0 50.3 30.3ZM57.2 31.3A2.6 2.4 70 1 0 59.0 36.2A2.6 2.4 70 1 0 57.2 31.3ZM66.7 28.8A3.2 2.7 98 1 0 65.8 35.2A3.2 2.7 98 1 0 66.7 28.8ZM-3.7 37.3A2.6 2.4 139 1 0 -7.6 40.7A2.6 2.4 139 1 0 -3.7 37.3ZM4.4 37.2A2.6 3.2 160 1 0 -0.5 39.0A2.6 3.2 160 1 0 4.4 37.2ZM13.9 41.2A3.3 2.9 171 1 0 7.4 42.2A3.3 2.9 171 1 0 13.9 41.2ZM19.3 37.9A2.8 2.6 4 1 0 24.9 38.3A2.8 2.6 4 1 0 19.3 37.9ZM31.8 37.2A2.5 3.0 131 1 0 28.6 40.9A2.5 3.0 131 1 0 31.8 37.2ZM36.5 37.5A2.2 3.2 52 1 0 39.2 41.0A2.2 3.2 52 1 0 36.5 37.5ZM41.7 35.2A3.2 2.2 38 1 0 46.7 39.1A3.2 2.2 38 1 0 41.7 35.2ZM54.4 37.7A2.8 3.1 103 1 0 53.2 43.0A2.8 3.1 103 1 0 54.4 37.7ZM61.1 37.2A3.2 2.8 34 1 0 66.3 40.7A3.2 2.8 34 1 0 61.1 37.2ZM71.9 35.6A3.2 2.4 98 1 0 71.0 42.0A3.2 2.4 98 1 0 71.9 35.6ZM-1.9 46.0A3.1 2.4 43 1 0 2.6 50.2A3.1 2.4 43 1 0 -1.9 46.0ZM8.3 47.3A2.2 2.7 173 1 0 3.9 47.9A2.2 2.7 173 1 0 8.3 47.3ZM18.0 47.3A2.3 2.5 132 1 0 14.9 50.7A2.3 2.5 132 1 0 18.0 47.3ZM27.4 47.3A2.5 2.6 173 1 0 22.5 47.9A2.5 2.6 173 1 0 27.4 47.3ZM30.1 46.9A2.8 3.2 6 1 0 35.7 47.5A2.8 3.2 6 1 0 30.1 46.9ZM43.8 44.0A3.2 3.0 116 1 0 40.9 49.8A3.2 3.0 116 1 0 43.8 44.0ZM47.1 43.1A2.8 3.2 55 1 0 50.3 47.7A2.8 3.2 55 1 0 47.1 43.1ZM61.1 46.6A2.8 2.2 142 1 0 56.6 50.1A2.8 2.2 142 1 0 61.1 46.6ZM66.7 48.0A3.0 2.7 15 1 0 72.4 49.5A3.0 2.7 15 1 0 66.7 48.0ZM-6.9 53.0A3.2 2.7 48 1 0 -2.7 57.8A3.2 2.7 48 1 0 -6.9 53.0ZM4.5 52.7A3.3 2.3 90 1 0 4.5 59.2A3.3 2.3 90 1 0 4.5 52.7ZM13.4 50.9A2.7 2.8 135 1 0 9.6 54.7A2.7 2.8 135 1 0 13.4 50.9ZM16.9 53.0A2.6 2.4 44 1 0 20.6 56.5A2.6 2.4 44 1 0 16.9 53.0ZM30.0 54.4A2.8 3.3 168 1 0 24.4 55.6A2.8 3.3 168 1 0 30.0 54.4ZM37.0 52.6A2.3 2.5 9 1 0 41.7 53.3A2.3 2.5 9 1 0 37.0 52.6ZM46.7 55.4A2.5 2.7 177 1 0 41.7 55.6A2.5 2.7 177 1 0 46.7 55.4ZM51.0 50.6A2.4 2.8 51 1 0 53.9 54.3A2.4 2.8 51 1 0 51.0 50.6ZM65.6 52.8A3.2 2.6 128 1 0 61.7 57.9A3.2 2.6 128 1 0 65.6 52.8ZM68.8 50.3A3.3 2.6 73 1 0 70.7 56.5A3.3 2.6 73 1 0 68.8 50.3ZM2.5 61.2A3.1 2.9 157 1 0 -3.3 63.7A3.1 2.9 157 1 0 2.5 61.2ZM9.0 62.3A2.8 2.5 156 1 0 4.0 64.6A2.8 2.5 156 1 0 9.0 62.3ZM15.4 62.2A2.8 3.3 15 1 0 20.8 63.6A2.8 3.3 15 1 0 15.4 62.2ZM22.7 60.9A3.2 2.3 3 1 0 29.1 61.3A3.2 2.3 3 1 0 22.7 60.9ZM29.7 62.2A2.5 2.5 2 1 0 34.7 62.4A2.5 2.5 2 1 0 29.7 62.2ZM43.6 61.0A3.2 2.6 163 1 0 37.4 62.9A3.2 2.6 163 1 0 43.6 61.0ZM47.7 60.2A2.4 2.9 34 1 0 51.7 62.9A2.4 2.9 34 1 0 47.7 60.2ZM60.8 57.8A2.3 2.2 112 1 0 59.1 62.0A2.3 2.2 112 1 0 60.8 57.8ZM67.3 58.7A3.0 2.3 104 1 0 65.8 64.4A3.0 2.3 104 1 0 67.3 58.7ZM-1.8 68.9A2.3 2.8 130 1 0 -4.7 72.4A2.3 2.8 130 1 0 -1.8 68.9ZM7.4 67.3A3.0 2.4 163 1 0 1.7 69.0A3.0 2.4 163 1 0 7.4 67.3ZM14.3 66.5A3.2 2.2 139 1 0 9.5 70.7A3.2 2.2 139 1 0 14.3 66.5ZM21.9 66.6A2.5 3.1 136 1 0 18.3 70.1A2.5 3.1 136 1 0 21.9 66.6ZM31.3 69.5A2.3 2.6 174 1 0 26.8 70.0A2.3 2.6 174 1 0 31.3 69.5ZM39.2 65.6A2.6 2.6 104 1 0 37.9 70.7A2.6 2.6 104 1 0 39.2 65.6ZM48.4 69.0A2.3 2.3 164 1 0 44.1 70.3A2.3 2.3 164 1 0 48.4 69.0ZM52.7 66.2A2.5 2.3 66 1 0 54.8 70.8A2.5 2.3 66 1 0 52.7 66.2ZM62.7 68.6A3.3 3.3 43 1 0 67.5 73.0A3.3 3.3 43 1 0 62.7 68.6ZM74.5 65.9A3.0 2.8 151 1 0 69.3 68.8A3.0 2.8 151 1 0 74.5 65.9Z" fill="#1a0805"/></g></svg><!--/LEO2-->
</div>

<!-- MENU -->
<div id="menu" class="a"></div>
<div class="a" style="left:551px;top:179px;width:1px;height:260px;background:#a0a0a0;"></div>
<div class="a" style="left:278px;top:440px;width:2px;height:272px;background:#404040;"></div>
<div class="a" style="left:552px;top:182px;width:3px;height:257px;background:linear-gradient(90deg,rgba(0,0,0,.55),rgba(0,0,0,.25) 50%,rgba(0,0,0,0));"></div>
<!--MENU-START-->
<div class="mi" style="top:182px;letter-spacing:0.11px">Nouveau motif...</div>
<div class="sep" style="top:204px"></div>
<div class="mi" style="top:210px;letter-spacing:0.03px">Renommer le motif...</div>
<div class="mi" style="top:229px;letter-spacing:0.06px">Supprimer le motif</div>
<div class="sep" style="top:251px"></div>
<div class="mi" style="top:257px;letter-spacing:-0.13px">Texte seul</div>
<div class="mi" style="top:276px;letter-spacing:-0.02px">Petite vignette</div>
<div class="mi" style="top:295px;letter-spacing:-0.09px">Grande vignette</div><svg class="a" style="left:284px;top:299px" width="11" height="10" viewBox="0 0 11 10"><path d="M2.1 4.4 L4.7 7.2 L8.9 1.6" fill="none" stroke="#000" stroke-width="2.1"/></svg>
<div class="mi" style="top:314px;letter-spacing:-0.11px">Petite liste</div>
<div class="mi" style="top:333px;letter-spacing:-0.2px">Grande liste</div>
<div class="sep" style="top:355px"></div>
<div class="mi" style="top:361px;letter-spacing:-0.16px">Gestionnaire des paramètres prédéfinis...</div>
<div class="sep" style="top:383px"></div>
<div class="mi" style="top:389px;letter-spacing:-0.1px">Réinitialiser les motifs...</div>
<div class="mi hl" style="top:408px;letter-spacing:-0.11px">Charger les motifs...</div>
<div class="mi" style="top:427px;letter-spacing:-0.13px">Enregistrer les motifs...</div>
<div class="mi" style="top:446px;letter-spacing:-0.1px">Remplacer les motifs...</div>
<div class="sep" style="top:468px"></div>
<div class="mi" style="top:474px;letter-spacing:-0.22px">Surfaces artistiques</div>
<div class="mi" style="top:493px;letter-spacing:-0.13px">Zone de travail des pinceaux d'artistes</div>
<div class="mi" style="top:512px;letter-spacing:-0.15px">Papier couleur</div>
<div class="mi" style="top:531px;letter-spacing:-0.19px">Textures érodables</div>
<div class="mi" style="top:550px;letter-spacing:-0.21px">Papier en niveaux de gris</div>
<div class="mi" style="top:569px;letter-spacing:0.08px">Motifs hérités</div>
<div class="mi" style="top:588px;letter-spacing:-0.02px">Nature</div>
<div class="mi" style="top:607px;letter-spacing:0.09px">Motifs 2</div>
<div class="mi" style="top:626px;letter-spacing:0.38px">Motifs</div>
<div class="mi" style="top:645px;letter-spacing:-0.33px">Roche</div>
<div class="mi" style="top:664px;letter-spacing:-0.15px">Texture 2</div>
<div class="mi" style="top:683px;letter-spacing:-0.07px">Texture</div>
<div class="mi" style="top:702px;letter-spacing:0.07px">Motifs du Web</div>
<!--MENU-END-->
</body></html>
